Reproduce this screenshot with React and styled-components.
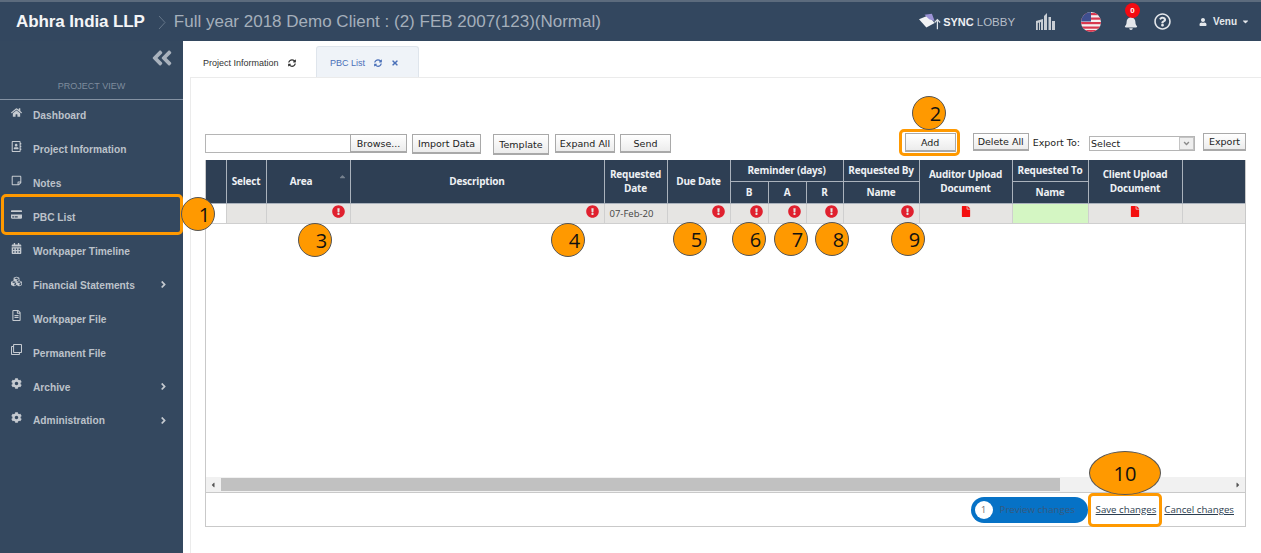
import styled, { createGlobalStyle } from "styled-components";
import {
  FaHome,
  FaRegAddressBook,
  FaRegStickyNote,
  FaCalendarAlt,
  FaCubes,
  FaRegFileAlt,
  FaRegClone,
  FaCog,
  FaAngleRight,
  FaAngleDown,
  FaAngleDoubleLeft,
  FaSyncAlt,
  FaTimes,
  FaExclamationCircle,
  FaFile,
  FaBell,
  FaRegQuestionCircle,
  FaUser,
  FaCaretDown,
  FaCaretRight,
  FaCaretLeft,
  FaCaretUp,
  FaCreditCard,
} from "react-icons/fa";

const GlobalStyle = createGlobalStyle`
  html, body {
    margin: 0;
    padding: 0;
    background: #fff;
    overflow: hidden;
  }
`;

const Page = styled.div`
  position: relative;
  width: 1261px;
  height: 553px;
  overflow: hidden;
  font-family: "Liberation Sans", Arial, sans-serif;
`;

const TopBar = styled.header`
  box-sizing: border-box;
  height: 41px;
  border-top: 2px solid #5c6b7d;
  background: #33475f;
  display: flex;
  align-items: center;
  padding: 0 11px 0 16px;
`;

const Brand = styled.span`
  color: #f4f5f7;
  font-size: 17px;
  font-weight: 700;
  letter-spacing: -0.1px;
`;

const Crumb = styled.span`
  color: #a5afbb;
  font-size: 17px;
  margin-left: 13px;
  display: flex;
  align-items: center;
  gap: 7px;
  flex: 1;
`;

const CrumbSep = styled.svg`
  width: 9px;
  height: 15px;
  margin-top: 2px;
`;

const TopIcons = styled.div`
  display: flex;
  align-items: center;
  color: #e4e7eb;
`;

const SyncLogo = styled.div`
  display: flex;
  align-items: center;
  font-size: 11px;
  color: #eef0f3;
  font-weight: 700;
  margin-right: 21px;

  svg {
    margin-right: 1px;
  }
  span {
    font-weight: 400;
    font-size: 11.5px;
    color: #b6bec8;
    margin-left: 3px;
  }
`;

const FlagSlot = styled.span`
  margin-left: 26px;
  display: flex;
`;

const BellWrap = styled.div`
  position: relative;
  width: 15px;
  height: 15px;
  margin: 3px 15px 0 23px;
  font-size: 14px;
`;

const BellBadge = styled.span`
  position: absolute;
  top: -13px;
  left: 1px;
  width: 15px;
  height: 15px;
  border-radius: 50%;
  background: #f30a12;
  color: #fff;
  font-size: 8px;
  font-weight: 700;
  line-height: 15px;
  text-align: center;
`;

const UserMenu = styled.div`
  display: flex;
  align-items: center;
  margin-left: 28px;
  font-size: 10px;
  font-weight: 700;
  color: #e4e7eb;
  gap: 4px;

  svg:first-child {
    margin-right: 2px;
  }
`;

const Body = styled.div`
  display: flex;
  height: 512px;
`;

const Sidebar = styled.aside`
  width: 183px;
  flex: none;
  background: #34485f;
  color: #c3c8cf;
`;

const CollapseRow = styled.div`
  height: 34px;
  display: flex;
  justify-content: flex-end;
  align-items: center;
  padding-right: 9px;
  color: #a9b2bd;
  font-size: 24px;
`;

const SideCaption = styled.div`
  height: 24px;
  border-bottom: 1px solid #8492a3;
  text-align: center;
  color: #7e8c9d;
  font-size: 9px;
  line-height: 23px;
`;

const NavItem = styled.div`
  box-sizing: border-box;
  height: 33.9px;
  display: flex;
  align-items: center;
  padding: 0 0 2px 11px;
  font-size: 10.2px;
  font-weight: 700;
  color: #bcc2ca;
  position: relative;

  > svg:first-child {
    width: 11px;
    height: 11px;
    margin: -7px 11px 0 0;
    color: #c5cad0;
  }
`;

const NavChevron = styled.span`
  position: absolute;
  left: 158px;
  top: 10px;
  font-size: 11px;
  color: #c5cad0;
`;

const Main = styled.main`
  flex: 1;
  background: #fff;
  padding: 5px 0 0 7px;
`;

const Tabs = styled.div`
  display: flex;
  height: 31px;
  font-size: 9px;
`;

const Tab = styled.div`
  width: ${(p) => p.$w}px;
  display: flex;
  align-items: center;
  box-sizing: border-box;
  padding: 2px 0 0 ${(p) => p.$pad}px;
  gap: 9px;
  color: ${(p) => (p.$active ? "#4a70b8" : "#333")};
  background: ${(p) => (p.$active ? "#eff3f8" : "#fff")};
  border: ${(p) => (p.$active ? "1px solid #dfe5ec" : "1px solid transparent")};
  border-bottom: 0;
  border-radius: 3px 3px 0 0;

  svg {
    width: 8px;
    height: 8px;
  }
`;

const Panel = styled.section`
  height: 476px;
  border-top: 1px solid #ebebeb;
  border-left: 1px solid #ebebeb;
  padding: 56px 15px 0 14px;
`;

const Toolbar = styled.div`
  display: flex;
  justify-content: space-between;
  align-items: flex-start;
  height: 26px;
`;

const ToolGroup = styled.div`
  display: flex;
  align-items: flex-start;
`;

const Btn = styled.button`
  box-sizing: border-box;
  width: ${(p) => p.$w}px;
  height: ${(p) => p.$h || 19}px;
  margin-left: ${(p) => p.$ml || 0}px;
  margin-top: ${(p) => p.$mt || 0}px;
  padding: 0;
  border: 1px solid #a9a9a9;
  border-bottom-width: 2px;
  background: linear-gradient(#fff, #ececec);
  font-family: "DejaVu Sans", sans-serif;
  font-size: 9.5px;
  color: #222;
`;

const FileField = styled.div`
  box-sizing: border-box;
  width: 145px;
  height: 19px;
  border: 1px solid #b5b5b5;
  border-right: 0;
  background: #fff;
`;

const ExportLabel = styled.span`
  font-family: "DejaVu Sans", sans-serif;
  font-size: 9.5px;
  color: #222;
  margin: 3px 0 0 4px;
`;

const SelectBox = styled.div`
  box-sizing: border-box;
  width: 106px;
  height: 15px;
  margin: 2px 0 0 9px;
  border: 1px solid #b5b5b5;
  display: flex;
  align-items: center;
  justify-content: space-between;
  font-family: "DejaVu Sans", sans-serif;
  font-size: 9.5px;
  color: #222;
  padding-left: 1px;
`;

const SelectArrow = styled.span`
  box-sizing: border-box;
  width: 15px;
  height: 13px;
  border: 1px solid #c4c4c4;
  background: #eee;
  color: #8a8a8a;
  display: flex;
  align-items: center;
  justify-content: center;
`;

const GridFrame = styled.div`
  box-sizing: border-box;
  width: 1041px;
  height: 333px;
  border-left: 1px solid #c9c9c9;
  border-right: 1px solid #c9c9c9;
  border-bottom: 1px solid #c9c9c9;
  display: flex;
  flex-direction: column;
  justify-content: space-between;
  overflow: hidden;
`;

const Table = styled.table`
  table-layout: fixed;
  border-collapse: collapse;
  width: 1039px;
  font-family: "Open Sans", sans-serif;
`;

const Th = styled.th`
  background: #2e3f54;
  color: #eef1f4;
  font-size: 10px;
  letter-spacing: -0.2px;
  font-weight: 700;
  line-height: 14px;
  height: ${(p) => p.$h || 21}px;
  padding: 0 ${(p) => p.$padRight || 2}px 0 2px;
  box-sizing: border-box;
  border: 1px solid #aab2bc;
  border-top: 0;
  position: relative;
  &:first-child {
    border-left: 0;
  }
  &:last-child {
    border-right: 0;
  }
`;

const SortMark = styled.span`
  position: absolute;
  right: 3px;
  top: 11px;
  font-size: 9px;
  color: #76818e;
`;

const Td = styled.td`
  background: ${(p) => (p.$blank ? "#fff" : p.$green ? "#d4f6c3" : "#e6e5e3")};
  border: 1px solid #cfcfcf;
  border-top: 0;
  height: 20px;
  box-sizing: border-box;
  padding: 0 5px;
  font-size: 9.5px;
  color: #444;
  text-align: ${(p) => p.$align || "right"};
  &:first-child {
    border-left: 0;
  }
  &:last-child {
    border-right: 0;
  }
`;

const Alert = styled(FaExclamationCircle)`
  color: #e0202e;
  width: 13px;
  height: 13px;
  display: block;
  margin: -3px 0 0 auto;
`;

const DocIcon = styled(FaFile)`
  color: #f40f0f;
  width: 10px;
  height: 11px;
  display: block;
  margin: -4px auto 0;
`;

const ScrollTrack = styled.div`
  height: 15px;
  background: #f1f1f1;
  display: flex;
  align-items: center;
  justify-content: space-between;
  padding: 0 3px;
  position: relative;
  font-size: 8px;
  color: #555;
`;

const ScrollThumb = styled.div`
  position: absolute;
  left: 15px;
  top: 1px;
  width: 839px;
  height: 13px;
  background: #c1c1c1;
`;

const GridFooter = styled.div`
  box-sizing: border-box;
  width: 1041px;
  height: 34px;
  border: 1px solid #c9c9c9;
  border-top: 0;
  display: flex;
  align-items: center;
  justify-content: flex-end;
  padding: 0 11px 0 0;
  font-family: "Open Sans", sans-serif;
  font-size: 9.7px;
  color: #2c3e50;
`;

const PreviewPill = styled.div`
  box-sizing: border-box;
  width: 117px;
  height: 26px;
  border-radius: 13px;
  background: #0672c6;
  display: flex;
  align-items: center;
  padding-left: 4px;
  gap: 7px;
  color: #36597d;
  margin-right: 8px;
`;

const PillCount = styled.span`
  width: 18px;
  height: 18px;
  border-radius: 50%;
  background: #fff;
  color: #666;
  font-size: 9px;
  line-height: 18px;
  text-align: center;
`;

const FooterLink = styled.a`
  text-decoration: underline;
  color: #2c3e50;
  margin-left: ${(p) => p.$ml || 0}px;
`;

const Callout = styled.div`
  position: absolute;
  left: ${(p) => p.$x}px;
  top: ${(p) => p.$y}px;
  width: ${(p) => p.$w || 34}px;
  height: ${(p) => p.$h || 34}px;
  box-sizing: border-box;
  border: 1px solid #555;
  border-radius: 50%;
  background: #ff9900;
  color: #111;
  font-family: "Open Sans", sans-serif;
  font-size: 20px;
  display: flex;
  align-items: center;
  justify-content: center;
  padding-left: ${(p) => (p.$w ? 0 : 13)}px;
`;

const Highlight = styled.div`
  position: absolute;
  left: ${(p) => p.$x}px;
  top: ${(p) => p.$y}px;
  width: ${(p) => p.$w}px;
  height: ${(p) => p.$h}px;
  box-sizing: border-box;
  border: 3px solid #ff9900;
  border-radius: 5px;
`;

const navItems = [
  { label: "Dashboard", icon: FaHome },
  { label: "Project Information", icon: FaRegAddressBook },
  { label: "Notes", icon: FaRegStickyNote },
  { label: "PBC List", icon: FaCreditCard },
  { label: "Workpaper Timeline", icon: FaCalendarAlt },
  { label: "Financial Statements", icon: FaCubes, more: true },
  { label: "Workpaper File", icon: FaRegFileAlt },
  { label: "Permanent File", icon: FaRegClone },
  { label: "Archive", icon: FaCog, more: true },
  { label: "Administration", icon: FaCog, more: true },
];

const columns = [20, 40, 84, 254, 63, 63, 38, 38, 37, 76, 93, 76, 94, 63];

const callouts = [
  { n: "1", x: 181, y: 197 },
  { n: "2", x: 912, y: 96 },
  { n: "3", x: 298, y: 223 },
  { n: "4", x: 551, y: 223 },
  { n: "5", x: 673, y: 222 },
  { n: "6", x: 732, y: 222 },
  { n: "7", x: 774, y: 222 },
  { n: "8", x: 815, y: 222 },
  { n: "9", x: 891, y: 222 },
  { n: "10", x: 1089, y: 451, w: 72, h: 44 },
];

function FlagIcon() {
  return (
    <svg width="20" height="20" viewBox="0 0 20 20">
      <clipPath id="flag-clip">
        <circle cx="10" cy="10" r="10" />
      </clipPath>
      <g clipPath="url(#flag-clip)">
        <rect width="20" height="20" fill="#f4f0f2" />
        <rect y="1" width="20" height="2.2" fill="#d9374f" />
        <rect y="5.5" width="20" height="2.2" fill="#d9374f" />
        <rect y="10" width="20" height="2.2" fill="#d9374f" />
        <rect y="14.5" width="20" height="2.2" fill="#d9374f" />
        <rect y="18" width="20" height="2" fill="#d9374f" />
        <rect width="10" height="9.5" fill="#3f4f8f" />
      </g>
    </svg>
  );
}

function BuildingIcon() {
  return (
    <svg width="19" height="17" viewBox="0 0 19 17" fill="#c9ced4">
      <path d="M0 8l7-2v11H5V9l-1 .3V17H3V9.6L1.8 10v7H0z" />
      <path d="M8 3l3-3v17H8z" />
      <path d="M12.5 4H15v13h-2.500zM16 8h3v9h-3z" />
    </svg>
  );
}

function SyncMark() {
  return (
    <svg width="23" height="18" viewBox="0 0 25 18">
      <path d="M0 6l8 9 9-5-7-8z" fill="#f2f3f5" />
      <path d="M6 1l8-1 3 8-6-2z" fill="#9c93d6" />
      <path
        d="M20 17V7M17 9.500l3-3 3 3"
        fill="none"
        stroke="#dfe3e8"
        strokeWidth="1.300"
      />
    </svg>
  );
}

function App() {
  return (
    <Page>
      <GlobalStyle />
      <TopBar>
        <Brand>Abhra India LLP</Brand>
        <Crumb>
          <CrumbSep viewBox="0 0 9 15">
            <path d="M1 1l6 6.500-6 6.500" fill="none" stroke="#66778a" />
          </CrumbSep>
          Full year 2018 Demo Client : (2) FEB 2007(123)(Normal)
        </Crumb>
        <TopIcons>
          <SyncLogo>
            <SyncMark />
            SYNC<span>LOBBY</span>
          </SyncLogo>
          <BuildingIcon />
          <FlagSlot>
            <FlagIcon />
          </FlagSlot>
          <BellWrap>
            <FaBell />
            <BellBadge>0</BellBadge>
          </BellWrap>
          <FaRegQuestionCircle size={17} />
          <UserMenu>
            <FaUser size={8} />
            Venu
            <FaCaretDown size={9} />
          </UserMenu>
        </TopIcons>
      </TopBar>
      <Body>
        <Sidebar>
          <CollapseRow>
            <FaAngleDoubleLeft />
          </CollapseRow>
          <SideCaption>PROJECT VIEW</SideCaption>
          {navItems.map((item) => (
            <NavItem key={item.label}>
              <item.icon />
              {item.label}
              {item.more && (
                <NavChevron>
                  <FaAngleRight />
                </NavChevron>
              )}
            </NavItem>
          ))}
        </Sidebar>
        <Main>
          <Tabs>
            <Tab $w={126} $pad={12}>
              Project Information
              <FaSyncAlt />
            </Tab>
            <Tab $w={103} $pad={13} $active>
              PBC List
              <FaSyncAlt />
              <FaTimes />
            </Tab>
          </Tabs>
          <Panel>
            <Toolbar>
              <ToolGroup>
                <FileField />
                <Btn $w={57}>Browse...</Btn>
                <Btn $w={69} $ml={5} $h={20}>
                  Import Data
                </Btn>
                <Btn $w={56} $ml={12} $h={21}>
                  Template
                </Btn>
                <Btn $w={60} $ml={6}>
                  Expand All
                </Btn>
                <Btn $w={51} $ml={5}>
                  Send
                </Btn>
              </ToolGroup>
              <ToolGroup>
                <Btn $w={51} $mt={-1}>
                  Add
                </Btn>
                <Btn $w={56} $ml={17} $mt={-1} $h={18}>
                  Delete All
                </Btn>
                <ExportLabel>Export To:</ExportLabel>
                <SelectBox>
                  Select
                  <SelectArrow>
                    <FaAngleDown size={9} />
                  </SelectArrow>
                </SelectBox>
                <Btn $w={43} $ml={8} $mt={-1} $h={18}>
                  Export
                </Btn>
              </ToolGroup>
            </Toolbar>
            <GridFrame>
              <Table>
                <colgroup>
                  {columns.map((w, i) => (
                    <col key={i} width={w} />
                  ))}
                </colgroup>
                <thead>
                  <tr>
                    <Th rowSpan={2} />
                    <Th rowSpan={2}>Select</Th>
                    <Th rowSpan={2} $padRight={16}>
                      Area
                      <SortMark>
                        <FaCaretUp />
                      </SortMark>
                    </Th>
                    <Th rowSpan={2}>Description</Th>
                    <Th rowSpan={2}>
                      Requested
                      <br />
                      Date
                    </Th>
                    <Th rowSpan={2}>Due Date</Th>
                    <Th colSpan={3}>Reminder (days)</Th>
                    <Th>Requested By</Th>
                    <Th rowSpan={2}>
                      Auditor Upload
                      <br />
                      Document
                    </Th>
                    <Th>Requested To</Th>
                    <Th rowSpan={2}>
                      Client Upload
                      <br />
                      Document
                    </Th>
                    <Th rowSpan={2} />
                  </tr>
                  <tr>
                    <Th $h={22}>B</Th>
                    <Th $h={22}>A</Th>
                    <Th $h={22}>R</Th>
                    <Th $h={22}>Name</Th>
                    <Th $h={22}>Name</Th>
                  </tr>
                </thead>
                <tbody>
                  <tr>
                    <Td $blank />
                    <Td />
                    <Td>
                      <Alert />
                    </Td>
                    <Td>
                      <Alert />
                    </Td>
                    <Td $align="left">07-Feb-20</Td>
                    <Td>
                      <Alert />
                    </Td>
                    <Td>
                      <Alert />
                    </Td>
                    <Td>
                      <Alert />
                    </Td>
                    <Td>
                      <Alert />
                    </Td>
                    <Td>
                      <Alert />
                    </Td>
                    <Td>
                      <DocIcon />
                    </Td>
                    <Td $green />
                    <Td>
                      <DocIcon />
                    </Td>
                    <Td />
                  </tr>
                </tbody>
              </Table>
              <ScrollTrack>
                <FaCaretLeft />
                <ScrollThumb />
                <FaCaretRight />
              </ScrollTrack>
            </GridFrame>
            <GridFooter>
              <PreviewPill>
                <PillCount>1</PillCount>
                Preview changes
              </PreviewPill>
              <FooterLink>Save changes</FooterLink>
              <FooterLink $ml={8}>Cancel changes</FooterLink>
            </GridFooter>
          </Panel>
        </Main>
      </Body>
      <Highlight $x={1} $y={194} $w={182} $h={41} />
      <Highlight $x={899} $y={129} $w={61} $h={27} />
      <Highlight $x={1088} $y={493} $w={74} $h={34} />
      {callouts.map((c) => (
        <Callout key={c.n} $x={c.x} $y={c.y} $w={c.w} $h={c.h}>
          {c.n}
        </Callout>
      ))}
    </Page>
  );
}

export default App;
